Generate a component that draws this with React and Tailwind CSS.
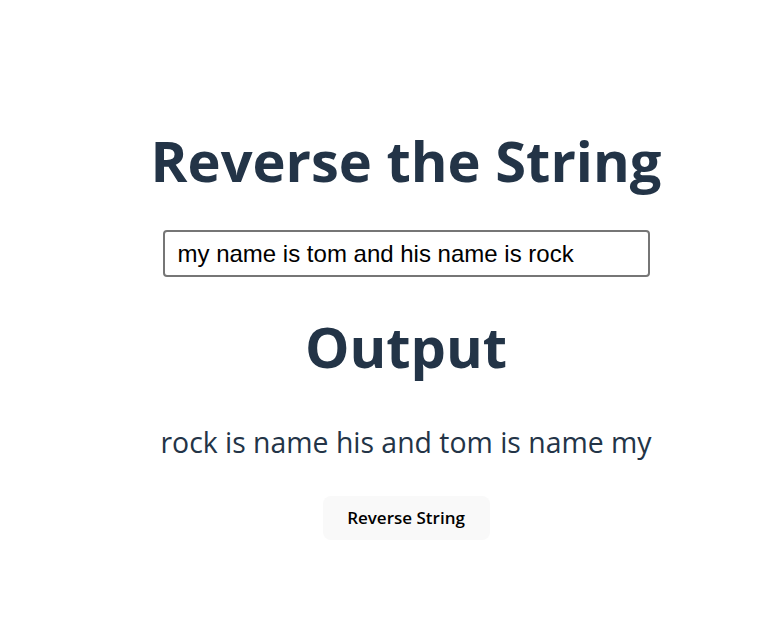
export default function App() {
  return (
    <div className="min-h-[634px] bg-white pl-[36px] flex flex-col items-center text-[#233447]" style={{ fontFamily: '"Open Sans", "Noto Sans", sans-serif' }}>
      <h1 className="mt-[120px] text-[56px] leading-[80px] font-bold">Reverse the String</h1>
      <input
        className="mt-[30px] w-[487px] h-[47px] border-2 border-[#767676] rounded-[4px] px-[13px] text-[24px] text-black outline-none"
        style={{ fontFamily: '"Liberation Sans", Arial, sans-serif' }}
        defaultValue="my name is tom and his name is rock"
      />
      <h2 className="mt-[29px] text-[56px] leading-[80px] font-bold">Output</h2>
      <p className="mt-[36px] text-[28.4px] leading-[40px]">rock is name his and tom is name my</p>
      <button className="mt-[34px] w-[167px] h-[44px] rounded-[8px] bg-[#f9f9f9] text-black text-[17px] font-semibold">
        Reverse String
      </button>
    </div>
  );
}
